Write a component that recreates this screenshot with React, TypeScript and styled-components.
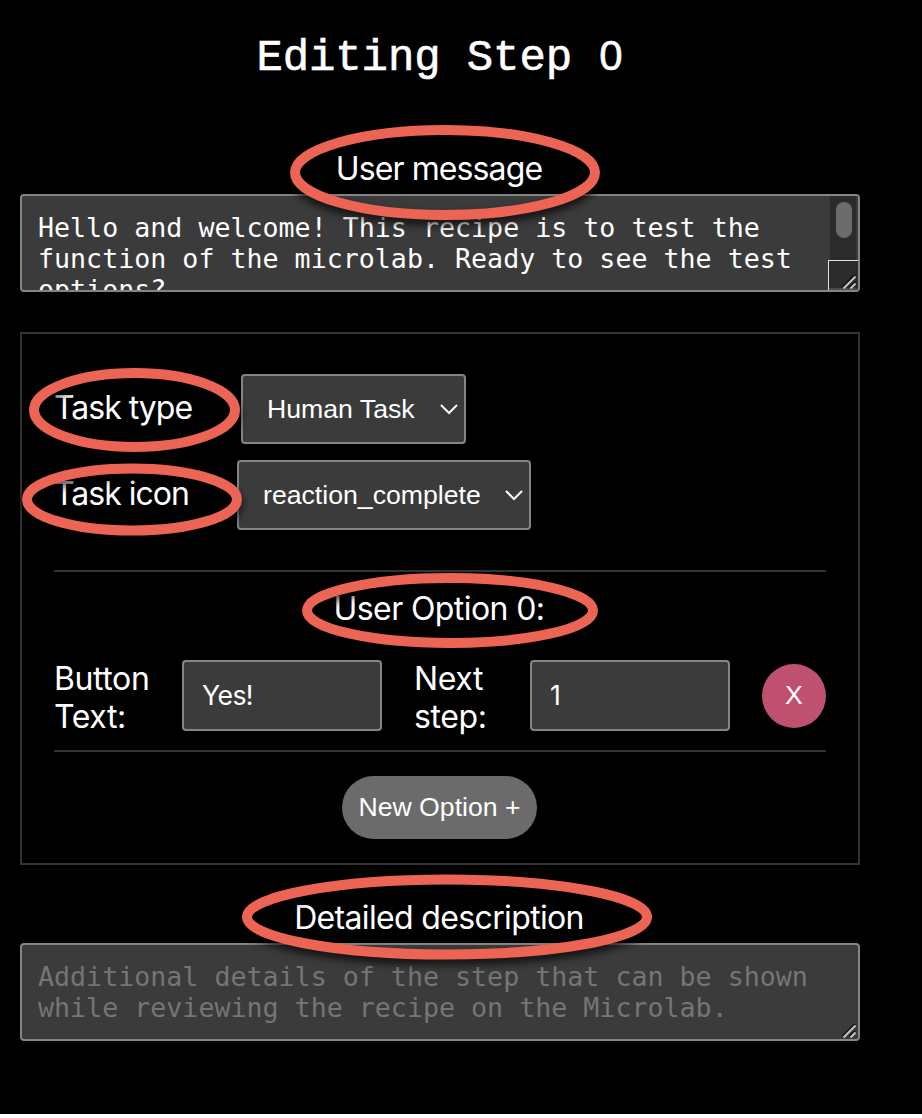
import React from 'react';
import styled, { createGlobalStyle } from 'styled-components';

const GlobalStyle = createGlobalStyle`
  * { box-sizing: border-box; }
  html { background: #fff; }
  body { margin: 0; overflow: hidden; }
`;

const sans = `Inter, "Liberation Sans", sans-serif`;
const arial = `"Liberation Sans", Arial, sans-serif`;
const mono = `"DejaVu Sans Mono", monospace`;

const Page = styled.main`
  position: relative;
  height: 1114px;
  padding: 0 62px 0 20px;
  background: #000;
  color: #fff;
  font: 400 32px/38px ${sans};
`;

const Title = styled.h1`
  margin: 0;
  height: 150px;
  padding-top: 31px;
  font: 400 44px/50px "Liberation Mono", monospace;
  text-align: center;
  letter-spacing: -0.1px;
  -webkit-text-stroke: 0.6px #fff;
`;

const StepNumber = styled.span`
  padding: 0 1px;
  font-family: ${arial};
  font-size: 42px;
`;

const Heading = styled.h2<{ $spacing: number }>`
  margin: 0 2px 0 0;
  font: inherit;
  text-align: center;
  letter-spacing: ${(p) => p.$spacing}px;
`;

const TextBox = styled.div<{ $muted?: boolean }>`
  position: relative;
  height: 98px;
  margin-top: 6px;
  padding: 16px;
  overflow: hidden;
  border: 2px solid #858585;
  border-radius: 4px;
  background: #3b3b3b;
  color: ${(p) => (p.$muted ? '#757575' : '#fff')};
  font: 400 26.65px/31px ${mono};
  white-space: pre;
`;

const ScrollTrack = styled.div`
  position: absolute;
  top: 0;
  right: 0;
  width: 28px;
  height: 94px;
  border-right: 2px solid #3b3b3b;
  background: #2b2b2b;
`;

const ScrollThumb = styled.div`
  width: 16px;
  height: 36px;
  margin: 6px 0 0 6px;
  border-radius: 8px;
  background: #6b6b6b;
`;

const ScrollCorner = styled.div`
  position: absolute;
  right: 0;
  bottom: 0;
  width: 30px;
  height: 30px;
  border: solid #e0e0e0;
  border-width: 1px 0 0 1px;
  background: linear-gradient(#2b2b2b 27px, #4a4a4a 27px);
`;

const Grip = styled.svg`
  position: absolute;
  right: 1px;
  bottom: 0;
`;

const Panel = styled.section`
  height: 533px;
  margin: 40px 0 34px;
  padding: 40px 32px 0;
  border: 2px solid #333;
`;

const SelectRow = styled.div`
  display: flex;
  height: 70px;
  margin-bottom: 16px;
`;

const SelectLabel = styled.label<{ $width: number }>`
  width: ${(p) => p.$width}px;
  padding-top: 15px;
  letter-spacing: -1px;
`;

const SelectBox = styled.div<{ $width: number }>`
  display: flex;
  justify-content: space-between;
  align-items: center;
  width: ${(p) => p.$width}px;
  height: 70px;
  padding: 0 5px 0 24px;
  border: 2px solid #858585;
  border-radius: 4px;
  background: #3b3b3b;
  font: 400 26.667px/32px ${arial};
`;

const OptionGroup = styled.div`
  height: 182px;
  margin-top: 40px;
  padding-top: 18px;
  border: solid #333;
  border-width: 2px 0;
`;

const OptionRow = styled.div`
  display: flex;
  align-items: flex-start;
  height: 76px;
  margin-top: 32px;
`;

const FieldLabel = styled.label<{ $width: number }>`
  width: ${(p) => p.$width}px;
  letter-spacing: -0.4px;
`;

const Field = styled.div<{ $gap: number }>`
  display: flex;
  align-items: center;
  width: 200px;
  height: 71px;
  margin-right: ${(p) => p.$gap}px;
  padding: 0 18px 1px;
  border: 2px solid #858585;
  border-radius: 4px;
  background: #3b3b3b;
  font: 400 26.667px/32px ${sans};
  letter-spacing: -0.6px;
`;

const RemoveButton = styled.button`
  width: 64px;
  height: 64px;
  margin-top: 4px;
  padding: 0 0 2px;
  border: 0;
  border-radius: 50%;
  background: #c05070;
  color: #fff;
  font: 400 26.667px/32px ${arial};
`;

const AddButton = styled.button`
  display: block;
  width: 195px;
  height: 63px;
  margin: 24px auto 0 288px;
  padding: 0 0 2px;
  border: 0;
  border-radius: 32px;
  background: #6b6b6b;
  color: #fff;
  font: 400 26.667px/32px ${arial};
  white-space: nowrap;
`;

const Annotations = styled.svg`
  position: absolute;
  top: 0;
  left: 0;
  pointer-events: none;

  ellipse {
    fill: none;
    stroke: #ec6453;
    stroke-width: 10px;
    filter: drop-shadow(0 5px 4px rgba(0, 0, 0, 0.75));
  }
`;

const Chevron = () => (
  <svg width="20" height="12" viewBox="0 0 20 12" fill="none" stroke="#fff" strokeWidth="2">
    <path d="M2 2 10 10 18 2" />
  </svg>
);

const ResizeGrip = () => (
  <Grip width="16" height="16" viewBox="0 0 16 16" fill="none">
    <path d="M1.5 13.5 14 1M8.5 13.5 14 8" stroke="#111" strokeWidth="2" />
    <path d="M2.5 14.5 14.5 2.5M9.5 14.5 14.5 9.5" stroke="#c4c4c4" strokeWidth="2" />
  </Grip>
);

const rings = [
  { cx: 445, cy: 172.5, rx: 150, ry: 42.5 },
  { cx: 134.5, cy: 410, rx: 100.5, ry: 37 },
  { cx: 132, cy: 499.5, rx: 105, ry: 31 },
  { cx: 450, cy: 610.5, rx: 143, ry: 32.5 },
  { cx: 447, cy: 917, rx: 200, ry: 37.5 },
];

export default function App() {
  return (
    <>
      <GlobalStyle />
      <Page>
        <Title>Editing Step <StepNumber>0</StepNumber></Title>
        <Heading $spacing={-0.9}>User message</Heading>
        <TextBox>
          {'Hello and welcome! This recipe is to test the\nfunction of the microlab. Ready to see the test\noptions?'}
          <ScrollTrack>
            <ScrollThumb />
          </ScrollTrack>
          <ScrollCorner />
          <ResizeGrip />
        </TextBox>

        <Panel>
          <SelectRow>
            <SelectLabel $width={187}>Task type</SelectLabel>
            <SelectBox $width={225}>
              Human Task
              <Chevron />
            </SelectBox>
          </SelectRow>
          <SelectRow>
            <SelectLabel $width={183}>Task icon</SelectLabel>
            <SelectBox $width={294}>
              reaction_complete
              <Chevron />
            </SelectBox>
          </SelectRow>
          <OptionGroup>
            <Heading $spacing={-0.6}>User Option 0:</Heading>
            <OptionRow>
              <FieldLabel $width={128}>Button<br />Text:</FieldLabel>
              <Field $gap={32}>Yes!</Field>
              <FieldLabel $width={116}>Next<br />step:</FieldLabel>
              <Field $gap={32}>1</Field>
              <RemoveButton>X</RemoveButton>
            </OptionRow>
          </OptionGroup>
          <AddButton>New Option +</AddButton>
        </Panel>

        <Heading $spacing={-0.65}>Detailed description</Heading>
        <TextBox $muted>
          {'Additional details of the step that can be shown\nwhile reviewing the recipe on the Microlab.'}
          <ResizeGrip />
        </TextBox>

        <Annotations width="922" height="1114" viewBox="0 0 922 1114">
          {rings.map((ring) => (
            <ellipse key={ring.cy} {...ring} />
          ))}
        </Annotations>
      </Page>
    </>
  );
}
